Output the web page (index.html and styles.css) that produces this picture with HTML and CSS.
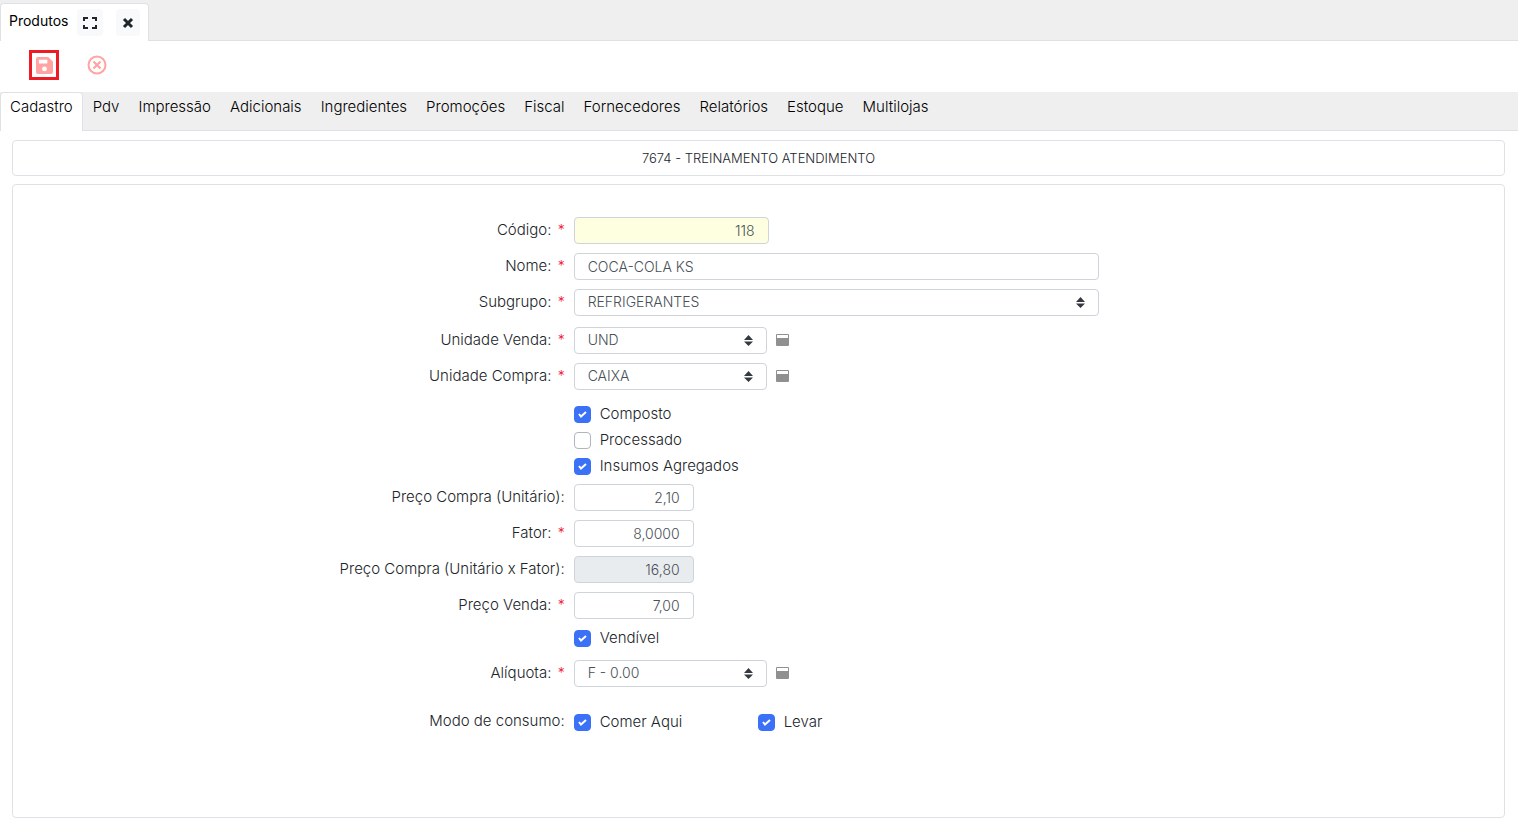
FILE: index.html
```html
<!DOCTYPE html>
<html lang="pt-br">

<head>
  <meta charset="UTF-8">
  <meta name="viewport" content="width=device-width, initial-scale=1.0">
  <title>Produtos</title>
  <link rel="stylesheet" href="styles.css">
</head>

<body>
  <!-- abas de janelas -->
  <header class="windows">
    <div class="window-tab">
      <span>Produtos</span>
      <button type="button" class="btn-window" aria-label="Maximizar">
        <svg width="14" height="14" viewBox="0 0 14 14" fill="none" stroke="#212529" stroke-width="2">
          <path d="M1 5V2h4M9 2h4v3M13 9v3H9M5 12H1V9" />
        </svg>
      </button>
      <button type="button" class="btn-window" aria-label="Fechar">
        <svg width="12" height="12" viewBox="0 0 12 12" fill="none" stroke="#212529" stroke-width="3">
          <path d="M2 2l8 8M10 2l-8 8" />
        </svg>
      </button>
    </div>
  </header>

  <!-- barra de ferramentas -->
  <div class="toolbar">
    <button type="button" class="btn-tool marked" aria-label="Salvar">
      <svg width="17" height="17" viewBox="0 0 18 18" fill="#ffa3a3" fill-rule="evenodd">
        <path d="M2 0h11l5 5v11a2 2 0 0 1-2 2H2a2 2 0 0 1-2-2V2a2 2 0 0 1 2-2zM3 3v4h9V3zM9 10a2.600 2.600 0 1 0 0 5.200a2.600 2.600 0 0 0 0-5.200z" />
      </svg>
    </button>
    <button type="button" class="btn-tool" aria-label="Cancelar">
      <svg width="20" height="20" viewBox="0 0 20 20" fill="none" stroke="#ffa3a3" stroke-width="2">
        <circle cx="10" cy="10" r="8.500" />
        <path d="M6.500 6.500l7 7M13.500 6.500l-7 7" stroke-width="2.200" />
      </svg>
    </button>
  </div>

  <nav class="tabs">
    <a href="#" class="active">Cadastro</a>
    <a href="#">Pdv</a>
    <a href="#">Impressão</a>
    <a href="#">Adicionais</a>
    <a href="#">Ingredientes</a>
    <a href="#">Promoções</a>
    <a href="#">Fiscal</a>
    <a href="#">Fornecedores</a>
    <a href="#">Relatórios</a>
    <a href="#">Estoque</a>
    <a href="#">Multilojas</a>
  </nav>

  <main>
    <div class="box store">7674 - TREINAMENTO ATENDIMENTO</div>

    <form class="box panel">
      <div class="group">
        <div class="row">
          <label for="codigo">Código: <i>*</i></label>
          <div class="field"><input type="text" id="codigo" class="control code" value="118"></div>
        </div>
        <div class="row">
          <label for="nome">Nome: <i>*</i></label>
          <div class="field"><input type="text" id="nome" class="control wide" value="COCA-COLA KS"></div>
        </div>
        <div class="row">
          <label for="subgrupo">Subgrupo: <i>*</i></label>
          <div class="field">
            <select id="subgrupo" class="control wide">
              <option>REFRIGERANTES</option>
            </select>
          </div>
        </div>
      </div>

      <div class="group units">
        <div class="row">
          <label for="venda">Unidade Venda: <i>*</i></label>
          <div class="field">
            <select id="venda" class="control medium">
              <option>UND</option>
            </select>
            <button type="button" class="btn-open" aria-label="Abrir unidade venda"></button>
          </div>
        </div>
        <div class="row">
          <label for="compra">Unidade Compra: <i>*</i></label>
          <div class="field">
            <select id="compra" class="control medium">
              <option>CAIXA</option>
            </select>
            <button type="button" class="btn-open" aria-label="Abrir unidade compra"></button>
          </div>
        </div>
      </div>

      <div class="checks">
        <div class="row">
          <div class="field check"><label><input type="checkbox" checked>Composto</label></div>
        </div>
        <div class="row">
          <div class="field check"><label><input type="checkbox">Processado</label></div>
        </div>
        <div class="row">
          <div class="field check"><label><input type="checkbox" checked>Insumos Agregados</label></div>
        </div>
      </div>

      <div class="group prices">
        <div class="row">
          <label for="preco">Preço Compra (Unitário):</label>
          <div class="field"><input type="text" id="preco" class="control price" value="2,10"></div>
        </div>
        <div class="row">
          <label for="fator">Fator: <i>*</i></label>
          <div class="field"><input type="text" id="fator" class="control price" value="8,0000"></div>
        </div>
        <div class="row">
          <label for="total">Preço Compra (Unitário x Fator):</label>
          <div class="field"><input type="text" id="total" class="control price" value="16,80" readonly></div>
        </div>
        <div class="row">
          <label for="preco-venda">Preço Venda: <i>*</i></label>
          <div class="field"><input type="text" id="preco-venda" class="control price" value="7,00"></div>
        </div>
      </div>

      <div class="sellable">
        <div class="row">
          <div class="field check"><label><input type="checkbox" checked>Vendível</label></div>
        </div>
      </div>

      <div class="tax">
        <div class="row">
          <label for="aliquota">Alíquota: <i>*</i></label>
          <div class="field">
            <select id="aliquota" class="control medium">
              <option>F - 0.00</option>
            </select>
            <button type="button" class="btn-open" aria-label="Abrir alíquota"></button>
          </div>
        </div>
      </div>

      <div class="row" role="group" aria-labelledby="modo">
        <span id="modo" class="title">Modo de consumo:</span>
        <div class="field check">
          <label><input type="checkbox" checked>Comer Aqui</label>
          <label><input type="checkbox" checked>Levar</label>
        </div>
      </div>
    </form>
  </main>
</body>

</html>
```
FILE: styles.css
```css
* {
  box-sizing: border-box;
}

body {
  margin: 0;
  background-color: #fff;
  color: #212529;
  font-family: Inter, "Liberation Sans", sans-serif;
  font-size: 15px;
  font-weight: 300;
  line-height: 20px;
}

button {
  display: flex;
  align-items: center;
  justify-content: center;
  padding: 0;
  border: 0;
  background: none;
  cursor: pointer;
}

/* abas de janelas */
.windows {
  display: flex;
  height: 41px;
  padding-top: 3px;
  background-color: #efefef;
  border-bottom: 1px solid #dee2e6;
}

.window-tab {
  display: flex;
  align-items: center;
  height: 38px;
  padding: 0 8px;
  border: 1px solid #dee2e6;
  border-bottom: 0;
  border-radius: 4px 4px 0 0;
  background-color: #fff;
  color: #000;
  font-size: 14px;
  font-weight: 400;
}

.window-tab span {
  padding-bottom: 4px;
}

.btn-window {
  width: 26px;
  height: 27px;
  margin-left: 9px;
  border-radius: 4px;
  background-color: #f8f9fa;
}

.btn-window + .btn-window {
  width: 24px;
  margin-left: 13px;
}

/* barra de ferramentas */
.toolbar {
  display: flex;
  align-items: center;
  gap: 23px;
  padding: 9px 29px 12px;
}

.btn-tool {
  width: 30px;
  height: 30px;
}

.btn-tool.marked {
  border: 3px solid #ed1c24;
}

.tabs {
  display: flex;
  gap: 1px;
  height: 39px;
  background-color: #efefef;
  border-bottom: 1px solid #dee2e6;
}

.tabs a {
  height: 39px;
  padding: 5px 9px;
  color: #000;
  text-decoration: none;
}

.tabs .active {
  padding-top: 4px;
  border: 1px solid #dee2e6;
  border-bottom: 0;
  border-radius: 4px 4px 0 0;
  background-color: #fff;
}

main {
  padding: 9px 13px 11px 12px;
}

.box {
  border: 1px solid #dee2e6;
  border-radius: 4px;
}

.store {
  margin-bottom: 8px;
  padding: 7px;
  font-size: 13px;
  text-align: center;
}

/* formulário */
.panel {
  padding: 32px 0 82px;
}

.row {
  display: grid;
  grid-template-columns: 37% 1fr;
  column-gap: 9px;
  align-items: center;
}

.row > label,
.title {
  padding-bottom: 2px;
  text-align: right;
}

.row i {
  margin-left: 2px;
  color: #f0142f;
  font-size: 14px;
  font-style: normal;
}

.field {
  display: flex;
  grid-column: 2;
}

.group {
  display: grid;
  gap: 9px;
}

.control {
  height: 27px;
  padding: 0 13px 1px;
  border: 1px solid #ced4da;
  border-radius: 4px;
  background-color: #fff;
  color: #495057;
  font: inherit;
  font-size: 14px;
}

select.control {
  appearance: none;
  background-image: url("data:image/svg+xml,%3Csvg xmlns='http://www.w3.org/2000/svg' width='9' height='11' viewBox='0 0 9 11'%3E%3Cpath fill='%23343a40' d='M0 5L4.500 0L9 5zM0 6.500L4.500 11L9 6.500z'/%3E%3C/svg%3E");
  background-repeat: no-repeat;
  background-position: right 13px center;
}

.wide {
  width: 56.5%;
}

.medium {
  width: 193px;
}

.price {
  width: 120px;
  text-align: right;
}

.code {
  width: 195px;
  background-color: #fdffe0;
  text-align: right;
}

.control:read-only:not(select) {
  background-color: #e9ecef;
}

/* ícone de janela ao lado dos selects */
.btn-open {
  width: 13px;
  height: 12px;
  margin: 7px 9px;
  border: 1px solid #909090;
  border-bottom-width: 8px;
  border-radius: 1px;
}

.units {
  margin: 11px 0;
}

.check {
  height: 26px;
  align-items: center;
}

.check label {
  display: flex;
  align-items: center;
  width: 184px;
}

.check input {
  appearance: none;
  width: 17px;
  height: 17px;
  margin: 0 9px 0 0;
  border: 1px solid #adb5bd;
  border-radius: 4px;
}

.check input:checked {
  border-color: #3b71f7;
  background: #3b71f7 url("data:image/svg+xml,%3Csvg xmlns='http://www.w3.org/2000/svg' width='9' height='7' viewBox='0 0 9 7'%3E%3Cpath fill='none' stroke='%23fff' stroke-width='2' d='M1 3l2 2.500L8 1'/%3E%3C/svg%3E") no-repeat center;
}

.prices {
  margin: 5px 0 6px;
}

.tax {
  margin: 9px 0 22px;
}
```
